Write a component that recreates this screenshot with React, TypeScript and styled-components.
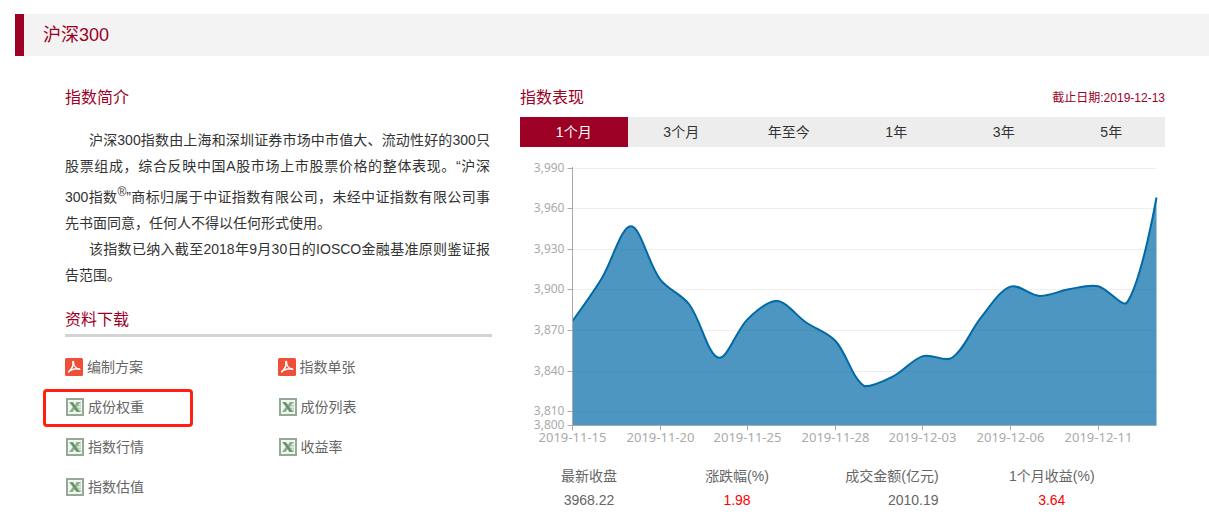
import React, { useState } from "react";
import styled, { createGlobalStyle } from "styled-components";

const GlobalStyle = createGlobalStyle`
  * { box-sizing: border-box; }
  body {
    margin: 0;
    background: #fff;
    color: #333;
    font: 14px/24px "Liberation Sans", "Noto Sans CJK SC", sans-serif;
  }
`;

const Page = styled.main`
  padding-top: 14px;
`;

const TitleBar = styled.header`
  margin-left: 15px;
  padding-left: 19px;
  border-left: 9px solid #9d0025;
  background: #f3f3f3;
`;

const Title = styled.h1`
  margin: 0;
  font-size: 18px;
  line-height: 42px;
  font-weight: 400;
  color: #9d0025;
`;

const Columns = styled.div`
  display: grid;
  grid-template-columns: minmax(0, 427fr) minmax(0, 645fr);
  gap: 28px;
  padding: 30px 44px 7px 65px;
`;

const Column = styled.section``;

const Heading = styled.h2`
  margin: 0;
  font-size: 16px;
  line-height: 24px;
  font-weight: 400;
  color: #9d0025;
`;

const HeadingRow = styled.div`
  display: flex;
  align-items: center;
  justify-content: space-between;
  margin-bottom: 7px;
`;

const CutoffDate = styled.span`
  font-size: 12px;
  color: #9d0025;
`;

const Intro = styled.div`
  padding: 17px 2px 20px 0;
`;

const Paragraph = styled.p`
  margin: 0;
  line-height: 26px;
  text-indent: 24px;
  text-align: justify;

  sup {
    font-size: 12px;
  }
`;

const Downloads = styled.ul`
  display: grid;
  grid-template-columns: 1fr 1fr;
  grid-auto-rows: 40px;
  margin: 2px 0 0;
  padding: 10px 2px 0 0;
  border-top: 3px solid #d3d3d3;
  list-style: none;
`;

const DownloadItem = styled.li`
  position: relative;
  display: flex;
  align-items: center;
`;

const DownloadLink = styled.a`
  display: flex;
  align-items: center;
  gap: 4px;
  color: #666;
  text-decoration: none;
`;

const HighlightFrame = styled.span`
  position: absolute;
  top: 2px;
  left: -22px;
  width: 150px;
  height: 38px;
  border: 3px solid #ff2011;
  border-radius: 4px;
  pointer-events: none;
`;

const Tabs = styled.div`
  display: grid;
  grid-template-columns: repeat(6, 1fr);
  background: #ededed;
`;

const Tab = styled.button<{ $active: boolean }>`
  height: 30px;
  padding: 0;
  border: 0;
  background: ${(p) => (p.$active ? "#9d0025" : "transparent")};
  color: ${(p) => (p.$active ? "#fff" : "#333")};
  font: inherit;
  cursor: pointer;
`;

const Chart = styled.svg`
  display: block;
  width: 100%;
  height: auto;
`;

const AxisLabel = styled.text<{ $size: number }>`
  font-family: "Noto Sans", "Open Sans", sans-serif;
  font-size: ${(p) => p.$size}px;
  fill: #aaa;
`;

const Stats = styled.table`
  width: 100%;
  margin-top: 9px;
  table-layout: fixed;
  border-collapse: collapse;
  color: #666;
`;

const StatCol = styled.col<{ $share: number }>`
  width: ${(p) => p.$share}%;
`;

const StatLabel = styled.th<{ $align: "center" | "right" }>`
  padding: 0;
  font-weight: 400;
  text-align: ${(p) => p.$align};
`;

const StatValue = styled.td<{ $align: "center" | "right"; $up: boolean }>`
  padding: 0;
  text-align: ${(p) => p.$align};
  color: ${(p) => (p.$up ? "#f00" : "inherit")};
`;

const PdfIcon = () => (
  <svg width="18" height="18" viewBox="0 0 18 18" aria-hidden="true">
    <rect width="18" height="18" rx="1.5" fill="#ee4f38" />
    <g fill="none" stroke="#fff" strokeLinecap="round" strokeLinejoin="round">
      <path d="M8.300 3.700C8.800 6.500 7.200 10.500 3.700 13.900" strokeWidth="1.500" />
      <path d="M8.300 3.700C8.300 7 10.500 10.400 14.600 11.300" strokeWidth="1.500" />
      <path d="M4.400 12.900C7.500 11.200 11.500 10.300 14.600 11.100" strokeWidth="1.300" />
      <path d="M8.200 3.800V6" strokeWidth="1.900" />
    </g>
  </svg>
);

const ExcelIcon = () => (
  <svg width="19" height="18" viewBox="0 0 19 18" aria-hidden="true">
    <rect x="1" width="18" height="18" fill="#95a797" />
    <rect x="3" y="2" width="14" height="14" fill="#f1f6f0" />
    <path d="M11 4h5v1.800h-5zM12 6.700h4v1.800h-4zM12 9.400h4v1.800h-4zM11 12.100h5v1.900h-5z" fill="#bfd0bf" />
    <path d="M4 4h4l2 2.700L12 4h3.500l-3.700 5 3.700 5h-4l-1.900-2.500L7.500 14H4l3.800-5z" fill="#8db08c" />
    <path d="M5 4.300h2.500l6.700 9.400h-2.500z" fill="#64906a" />
  </svg>
);

type Download = { kind: "pdf" | "xls"; label: string; highlighted?: boolean };

const downloads: Download[] = [
  { kind: "pdf", label: "编制方案" },
  { kind: "pdf", label: "指数单张" },
  { kind: "xls", label: "成份权重", highlighted: true },
  { kind: "xls", label: "成份列表" },
  { kind: "xls", label: "指数行情" },
  { kind: "xls", label: "收益率" },
  { kind: "xls", label: "指数估值" },
];

const periods = ["1个月", "3个月", "年至今", "1年", "3年", "5年"];

const stats = [
  { label: "最新收盘", value: "3968.22", share: 21.4, align: "center", up: false },
  { label: "涨跌幅(%)", value: "1.98", share: 24.5, align: "center", up: true },
  { label: "成交金额(亿元)", value: "2010.19", share: 19, align: "right", up: false },
  { label: "1个月收益(%)", value: "3.64", share: 35.1, align: "center", up: true },
] as const;

const closes = [
  3877.1, 3908.5, 3947, 3907.8, 3889.3, 3850, 3878.5, 3891.8, 3876, 3862.5,
  3829, 3836.5, 3851.2, 3850, 3880, 3902.5, 3895.6, 3900.5, 3902.8, 3891, 3968.2,
];

const dateTicks = [
  "2019-11-15", "2019-11-20", "2019-11-25", "2019-11-28", "2019-12-03", "2019-12-06", "2019-12-11",
];

const priceTicks = [3990, 3960, 3930, 3900, 3870, 3840, 3810, 3800];

const LEFT = 52.5;
const RIGHT = 636.5;
const TOP = 21;
const BOTTOM = 278.5;
const SMOOTHING = 0.33;

const xAt = (i: number) => LEFT + ((RIGHT - LEFT) * i) / (closes.length - 1);
const yAt = (v: number) => BOTTOM - ((v - 3800) / 190) * (BOTTOM - TOP);
const crisp = (n: number) => Math.floor(n) + 0.5;

type Point = [number, number];

// Bezier handles follow the chord between neighbours, kept inside the series' range.
function smoothPath(points: Point[]) {
  const ys = points.map((p) => p[1]);
  const min = Math.min(...ys);
  const max = Math.max(...ys);
  const clamp = (y: number) => Math.max(min, Math.min(max, y));
  let d = `M${points[0][0]},${points[0][1]}`;
  let out: Point = points[0];
  for (let i = 1; i < points.length; i++) {
    const prev = points[i - 1];
    const cur = points[i];
    const next = points[i + 1];
    let into: Point = cur;
    let nextOut: Point = cur;
    if (next) {
      const a = Math.hypot(cur[0] - prev[0], cur[1] - prev[1]);
      const b = Math.hypot(next[0] - cur[0], next[1] - cur[1]);
      const ratio = b / (a + b);
      const vx = (next[0] - prev[0]) * SMOOTHING;
      const vy = (next[1] - prev[1]) * SMOOTHING;
      into = [cur[0] - vx * (1 - ratio), clamp(cur[1] - vy * (1 - ratio))];
      nextOut = [cur[0] + vx * ratio, clamp(cur[1] + vy * ratio)];
    }
    d += `C${out.join()} ${into.join()} ${cur.join()}`;
    out = nextOut;
  }
  return d;
}

function PriceChart() {
  const line = smoothPath(closes.map((v, i) => [xAt(i), yAt(v)] as Point));
  return (
    <Chart viewBox="0 0 645 308" role="img" aria-label="指数表现">
      {priceTicks.map((v) => {
        const y = crisp(yAt(v));
        return (
          <g key={v}>
            <line x1={LEFT} x2={RIGHT} y1={y} y2={y} stroke="#eee" />
            <line x1={LEFT - 5} x2={LEFT} y1={y} y2={y} stroke="#aaa" />
            <AxisLabel $size={12} x={LEFT - 8} y={y + 3} textAnchor="end">
              {v.toLocaleString("en-US")}
            </AxisLabel>
          </g>
        );
      })}
      <path d={`${line}L${RIGHT},${BOTTOM}L${LEFT},${BOTTOM}Z`} fill="#0069a6" fillOpacity="0.7" />
      <path d={line} fill="none" stroke="#0069a6" strokeWidth="2" strokeLinejoin="bevel" />
      <path d={`M${LEFT},${TOP - 1}V${BOTTOM}H${RIGHT}`} fill="none" stroke="#aaa" />
      {dateTicks.map((date, i) => {
        const x = crisp(xAt(i * 3));
        return (
          <g key={date}>
            <line x1={x} x2={x} y1={BOTTOM} y2={BOTTOM + 5} stroke="#aaa" />
            <AxisLabel $size={13} x={x} y={BOTTOM + 16} textAnchor="middle">
              {date}
            </AxisLabel>
          </g>
        );
      })}
    </Chart>
  );
}

export default function App() {
  const [period, setPeriod] = useState(0);
  return (
    <>
      <GlobalStyle />
      <Page>
        <TitleBar>
          <Title>沪深300</Title>
        </TitleBar>
        <Columns>
          <Column>
            <Heading>指数简介</Heading>
            <Intro>
              <Paragraph>
                沪深300指数由上海和深圳证券市场中市值大、流动性好的300只股票组成，综合反映中国A股市场上市股票价格的整体表现。“沪深300指数<sup>®</sup>”商标归属于中证指数有限公司，未经中证指数有限公司事先书面同意，任何人不得以任何形式使用。
              </Paragraph>
              <Paragraph>该指数已纳入截至2018年9月30日的IOSCO金融基准原则鉴证报告范围。</Paragraph>
            </Intro>
            <Heading>资料下载</Heading>
            <Downloads>
              {downloads.map((d) => (
                <DownloadItem key={d.label}>
                  <DownloadLink href="#">
                    {d.kind === "pdf" ? <PdfIcon /> : <ExcelIcon />}
                    {d.label}
                  </DownloadLink>
                  {d.highlighted && <HighlightFrame />}
                </DownloadItem>
              ))}
            </Downloads>
          </Column>
          <Column>
            <HeadingRow>
              <Heading>指数表现</Heading>
              <CutoffDate>截止日期:2019-12-13</CutoffDate>
            </HeadingRow>
            <Tabs role="tablist">
              {periods.map((name, i) => (
                <Tab key={name} role="tab" aria-selected={i === period} $active={i === period} onClick={() => setPeriod(i)}>
                  {name}
                </Tab>
              ))}
            </Tabs>
            <PriceChart />
            <Stats>
              <colgroup>
                {stats.map((s) => (
                  <StatCol key={s.label} $share={s.share} />
                ))}
              </colgroup>
              <thead>
                <tr>
                  {stats.map((s) => (
                    <StatLabel key={s.label} scope="col" $align={s.align}>
                      {s.label}
                    </StatLabel>
                  ))}
                </tr>
              </thead>
              <tbody>
                <tr>
                  {stats.map((s) => (
                    <StatValue key={s.label} $align={s.align} $up={s.up}>
                      {s.value}
                    </StatValue>
                  ))}
                </tr>
              </tbody>
            </Stats>
          </Column>
        </Columns>
      </Page>
    </>
  );
}
